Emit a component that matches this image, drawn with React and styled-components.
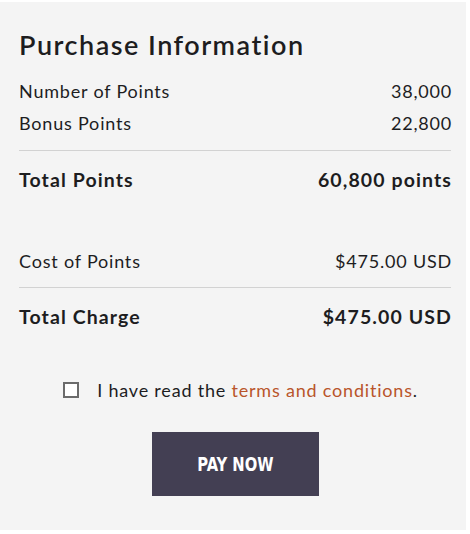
import React from 'react';
import styled, { createGlobalStyle } from 'styled-components';

const GlobalStyle = createGlobalStyle`
  html, body {
    margin: 0;
    padding: 0;
    background: #ffffff;
  }
  body {
    font-family: 'Lato', 'Open Sans', sans-serif;
    color: #1d1d1f;
  }
`;

const Panel = styled.section`
  margin-top: 2px;
  width: 466px;
  height: 528px;
  box-sizing: border-box;
  background: #f4f4f4;
  padding: 26px 14px 0 19px;
`;

const Title = styled.h2`
  margin: 0 0 14px;
  font-size: 27px;
  font-weight: 600;
  letter-spacing: 1.5px;
  color: #1d1d1f;
`;

const Row = styled.div`
  display: flex;
  justify-content: space-between;
  align-items: center;
  height: ${(p) => (p.$total ? '56px' : '32px')};
  font-size: ${(p) => (p.$total ? '19.5px' : '18px')};
  font-weight: ${(p) => (p.$total ? 700 : 400)};
  letter-spacing: ${(p) => (p.$total ? '1.1px' : '0.8px')};
`;

const Divider = styled.hr`
  margin: 0 1px 0 0;
  border: 0;
  border-top: 1px solid #d2d2d2;
`;

const Spacer = styled.div`
  height: ${(p) => p.$h}px;
`;

const Agree = styled.label`
  display: flex;
  align-items: center;
  justify-content: center;
  gap: 18px;
  margin-top: 35px;
  padding-left: 10px;
  font-size: 18px;
  letter-spacing: 0.8px;
  color: #1d1d1f;
`;

const Box = styled.span`
  width: 12px;
  height: 12px;
  border: 2px solid #6b6b6b;
  background: #ffffff;
`;

const Link = styled.a`
  color: #b9552b;
  text-decoration: none;
`;

const PayButton = styled.button`
  display: block;
  margin: 31px auto 0;
  width: 167px;
  height: 64px;
  border: 0;
  background: #433f53;
  color: #ffffff;
  font-family: 'Liberation Sans Narrow', 'DejaVu Sans Condensed', sans-serif;
  font-stretch: condensed;
  font-weight: 700;
  font-size: 20px;
  cursor: pointer;
`;

const Label = styled.span`
  display: inline-block;
  transform: scaleX(0.82);
`;

export default function App() {
  return (
    <>
      <GlobalStyle />
      <Panel>
        <Title>Purchase Information</Title>
        <Row>
          <span>Number of Points</span>
          <span>38,000</span>
        </Row>
        <Row>
          <span>Bonus Points</span>
          <span>22,800</span>
        </Row>
        <Spacer $h={11} />
        <Divider />
        <Row $total>
          <span>Total Points</span>
          <span>60,800 points</span>
        </Row>
        <Spacer $h={38} />
        <Row>
          <span>Cost of Points</span>
          <span>$475.00 USD</span>
        </Row>
        <Spacer $h={10} />
        <Divider />
        <Row $total>
          <span>Total Charge</span>
          <span>$475.00 USD</span>
        </Row>
        <Agree>
          <Box />
          <span>
            I have read the <Link href="#">terms and conditions</Link>.
          </span>
        </Agree>
        <PayButton>
          <Label>PAY NOW</Label>
        </PayButton>
      </Panel>
    </>
  );
}
